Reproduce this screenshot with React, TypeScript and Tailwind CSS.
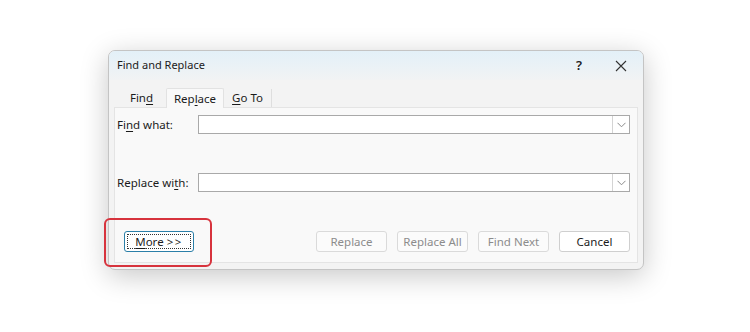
import React from "react";

const U = ({ children }: { children: React.ReactNode }) => (
  <span className="underline underline-offset-[2px] decoration-[1px]">{children}</span>
);

function Combo() {
  return (
    <div className="flex-1 h-[19px] bg-white border border-[#a9a9a9] flex justify-end">
      <div className="w-[17px] h-full border-l border-[#d4d4d4] bg-white flex items-center justify-center">
        <svg width="9" height="6" viewBox="0 0 9 6">
          <path d="M0.5 0.8 L4.5 4.8 L8.5 0.8" fill="none" stroke="#8a8a8a" strokeWidth="1" />
        </svg>
      </div>
    </div>
  );
}

function Btn({ children, disabled }: { children: React.ReactNode; disabled?: boolean }) {
  return (
    <div
      className={
        "w-[71px] h-[21px] rounded-[3px] border flex items-center justify-center text-[11.5px] " +
        (disabled
          ? "border-[#dadada] bg-[#fbfbfb] text-[#8c8c8c]"
          : "border-[#cfcfcf] bg-white text-[#1b1b1b]")
      }
    >
      {children}
    </div>
  );
}

export default function App() {
  return (
    <div
      className="relative w-[750px] h-[332px] bg-white pt-[50px] pl-[108px] overflow-hidden"
      style={{ fontFamily: '"Noto Sans", "Open Sans", sans-serif' }}
    >
      <div className="w-[536px] h-[220px] rounded-[7px] border border-[#c4c4c4] bg-[#f3f3f3] shadow-[0_6px_28px_rgba(0,0,0,0.22)] flex flex-col overflow-hidden">
        {/* title bar */}
        <div className="h-[29px] shrink-0 flex items-center pl-[8px] bg-gradient-to-b from-[#e3f0f8] to-[#f1f3f4]">
          <span className="text-[11px] text-[#1b1b1b]">Find and Replace</span>
          <span className="ml-auto mr-[33px] text-[13px] font-semibold text-[#222]">?</span>
          <svg className="mr-[16px]" width="12" height="12" viewBox="0 0 12 12">
            <path d="M1 1 L11 11 M11 1 L1 11" stroke="#333" strokeWidth="1.1" fill="none" />
          </svg>
        </div>
        {/* tabs */}
        <div className="mt-[7px] ml-[5px] flex items-end h-[20px] shrink-0 text-[11.5px] text-[#1b1b1b]">
          <div className="w-[52px] h-[18px] flex items-center justify-center pl-[3px]">
            Fin<U>d</U>
          </div>
          <div className="w-[58px] h-[20px] flex items-center justify-center bg-[#f9f9f9] border border-b-0 border-[#e2e2e2] rounded-t-[2px] -mb-[1px] relative z-10">
            Rep<U>l</U>ace
          </div>
          <div className="w-[48px] h-[18px] flex items-center justify-center border-r border-[#dedede]">
            <U>G</U>o To
          </div>
        </div>
        {/* panel */}
        <div className="flex-1 mx-[5px] mb-[6px] bg-[#f9f9f9] border border-[#e4e4e4] flex flex-col pl-[2px] pr-[7px] pt-[7px] text-[11.5px] text-[#1b1b1b]">
          <div className="flex items-center h-[19px]">
            <div className="w-[81px]">
              Fi<U>n</U>d what:
            </div>
            <Combo />
          </div>
          <div className="flex items-center h-[19px] mt-[39px]">
            <div className="w-[81px]">
              Replace wi<U>t</U>h:
            </div>
            <Combo />
          </div>
          <div className="flex items-center mt-[39px] pl-[7px] gap-[10px]">
            <div className="w-[70px] h-[21px] rounded-[3px] border border-[#2b7fa8] bg-white p-[2px]">
              <div className="w-full h-full border border-dotted border-[#333] flex items-center justify-center text-[11.5px]">
                <U>M</U>ore <span className="tracking-[1.5px] ml-[3px]">&gt;&gt;</span>
              </div>
            </div>
            <div className="ml-auto flex gap-[10px]">
              <Btn disabled>Replace</Btn>
              <Btn disabled>Replace All</Btn>
              <Btn disabled>Find Next</Btn>
              <Btn>Cancel</Btn>
            </div>
          </div>
        </div>
      </div>
      {/* red highlight */}
      <div className="absolute left-[104px] top-[218px] w-[108px] h-[49px] rounded-[6px] border-2 border-[#d7333d]" />
    </div>
  );
}
